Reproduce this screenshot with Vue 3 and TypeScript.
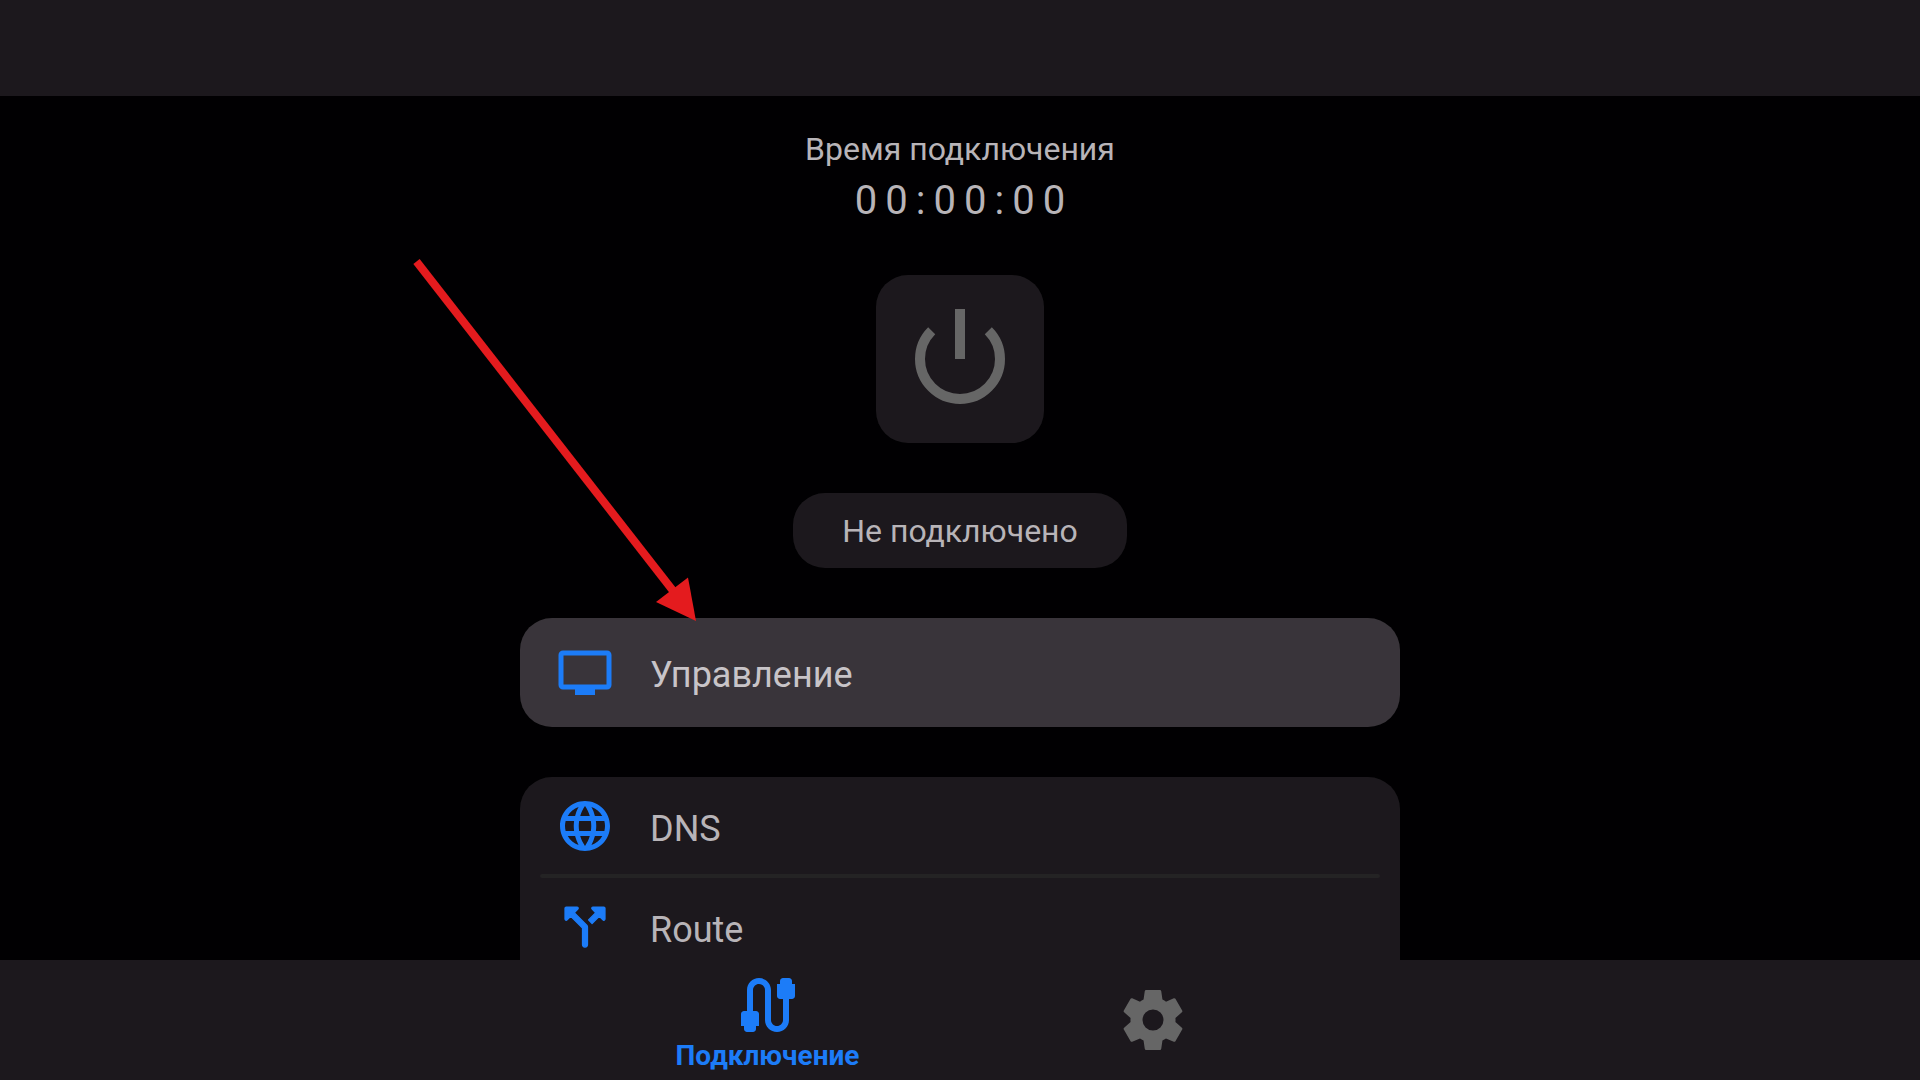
<script setup lang="ts">
import { ref } from 'vue'

const elapsed = ref('00:00:00')
const status = ref('Не подключено')

const settings = [
  {
    id: 'dns',
    label: 'DNS',
    outline: 0,
    icon: 'M11.99 2C6.47 2 2 6.48 2 12s4.47 10 9.99 10C17.52 22 22 17.52 22 12S17.52 2 11.99 2zm6.93 6h-2.95c-.32-1.25-.78-2.45-1.38-3.56 1.84.63 3.37 1.91 4.33 3.56zM12 4.04c.83 1.2 1.48 2.53 1.91 3.96h-3.82c.43-1.43 1.08-2.76 1.91-3.96zM4.26 14C4.1 13.36 4 12.69 4 12s.1-1.36.26-2h3.38c-.08.66-.14 1.32-.14 2 0 .68.06 1.34.14 2H4.26zm.82 2h2.95c.32 1.25.78 2.45 1.38 3.56-1.84-.63-3.37-1.9-4.33-3.56zm2.95-8H5.08c.96-1.66 2.49-2.93 4.33-3.56C8.81 5.55 8.35 6.75 8.03 8zM12 19.96c-.83-1.2-1.48-2.53-1.91-3.96h3.82c-.43 1.43-1.08 2.76-1.91 3.96zM14.34 14H9.66c-.09-.66-.16-1.32-.16-2 0-.68.07-1.35.16-2h4.68c.09.65.16 1.32.16 2 0 .68-.07 1.34-.16 2zm.25 5.56c.6-1.11 1.06-2.31 1.38-3.56h2.95c-.96 1.65-2.49 2.93-4.33 3.56zM16.36 14c.08-.66.14-1.32.14-2 0-.68-.06-1.34-.14-2h3.38c.16.64.26 1.31.26 2s-.1 1.36-.26 2h-3.38z',
  },
  {
    id: 'route',
    label: 'Route',
    outline: 0.5,
    icon: 'M14.85 4.85l1.44 1.44-2.88 2.88 1.42 1.42 2.88-2.88 1.44 1.44c.31.31.85.09.85-.36V4.5c0-.28-.22-.5-.5-.5h-4.29c-.45 0-.67.54-.36.85zM8.79 4H4.5c-.28 0-.5.22-.5.5v4.29c0 .45.54.67.85.35L6.29 7.7 11 12.4V19c0 .55.45 1 1 1s1-.45 1-1v-7c0-.26-.11-.52-.29-.71l-5-5.01 1.44-1.44c.31-.3.09-.84-.36-.84z',
  },
]
</script>

<template>
  <div class="app">
    <header class="top-bar"></header>

    <main class="content">
      <div class="column">
        <p class="caption">Время подключения</p>
        <p class="timer">{{ elapsed }}</p>

        <button class="power" type="button" aria-label="Подключиться">
          <svg viewBox="0 0 24 24" width="120" height="120" aria-hidden="true">
            <path d="M12 2v10M6.34 6.34a8 8 0 1 0 11.32 0" fill="none" stroke="currentColor" stroke-width="2" />
          </svg>
        </button>

        <p class="status">{{ status }}</p>

        <div class="manage">
          <button class="row row-focused" type="button">
            <svg class="row-icon" viewBox="0 0 60 60" aria-hidden="true">
              <rect x="6" y="11" width="48" height="34" rx="2" fill="none" stroke="currentColor" stroke-width="5" />
              <path d="M20 45h20v8H20z" fill="currentColor" />
            </svg>
            <span class="row-label">Управление</span>
          </button>
          <svg class="pointer" viewBox="0 0 292 368" aria-hidden="true">
            <path d="M8.500 5.500L266 336" stroke="#e41b1e" stroke-width="8" />
            <path d="M248 346l32-24.500 8 43.500z" fill="#e41b1e" />
          </svg>
        </div>

        <ul class="list">
          <li v-for="item in settings" :key="item.id">
            <button class="row" type="button">
              <svg class="row-icon" viewBox="0 0 24 24" aria-hidden="true">
                <path
                  :d="item.icon"
                  fill="currentColor"
                  stroke="currentColor"
                  stroke-linejoin="round"
                  :stroke-width="item.outline"
                />
              </svg>
              <span class="row-label">{{ item.label }}</span>
            </button>
          </li>
        </ul>
      </div>
    </main>

    <nav class="nav">
      <a class="tab tab-active" href="#connection" aria-current="page">
        <svg viewBox="0 0 24 24" width="72" height="72" aria-hidden="true">
          <path
            fill="currentColor"
            d="M20 5V4c0-.55-.45-1-1-1h-2c-.55 0-1 .45-1 1v1h-1v4c0 .55.45 1 1 1h1v7c0 1.100-.9 2-2 2s-2-.9-2-2V7c0-2.210-1.790-4-4-4S5 4.790 5 7v7H4c-.55 0-1 .45-1 1v4h1v1c0 .55.45 1 1 1h2c.55 0 1-.45 1-1v-1h1v-4c0-.55-.45-1-1-1H7V7c0-1.100.9-2 2-2s2 .9 2 2v10c0 2.210 1.790 4 4 4s4-1.790 4-4v-7h1c.55 0 1-.45 1-1V5h-1z"
          />
        </svg>
        <span>Подключение</span>
      </a>
      <a class="tab" href="#settings" aria-label="Настройки">
        <svg viewBox="0 0 24 24" width="72" height="72" aria-hidden="true">
          <path
            fill="currentColor"
            d="M9.700 22q-.4 0-.45-.4l-.4-2.800q-.325-.125-.613-.3-.287-.175-.562-.375l-2.600 1.100q-.35.15-.55-.15l-2.250-3.900q-.2-.35.1-.6l2.150-1.900Q4.500 12.500 4.500 12.337v-.675q0-.162.025-.337L2.375 9.425q-.3-.25-.1-.6l2.250-3.900q.2-.3.55-.15l2.600 1.100q.275-.2.575-.375.3-.175.6-.3l.4-2.800q.05-.4.45-.4h4.600q.4 0 .45.4l.4 2.800q.325.125.613.3.287.175.562.375l2.600-1.100q.35-.15.55.15l2.250 3.900q.2.35-.1.6l-2.150 1.900q.025.175.025.337v.675q0 .163-.025.338l2.150 1.900q.3.25.1.6l-2.250 3.900q-.2.3-.55.15l-2.600-1.100q-.275.2-.575.375-.3.175-.6.3l-.4 2.800q-.05.4-.45.4zM12 15.500a3.500 3.500 0 1 0 0-7 3.500 3.500 0 0 0 0 7z"
          />
        </svg>
      </a>
    </nav>
  </div>
</template>

<style>
body {
  background: #010002;
}
</style>

<style scoped>
.app {
  display: flex;
  flex-direction: column;
  height: 100vh;
  overflow: hidden;
  background: #010002;
  color: #b8b4b8;
  font-family: Roboto, 'Noto Sans', sans-serif;
}

p,
ul {
  margin: 0;
  padding: 0;
}

ul {
  list-style: none;
}

svg {
  display: block;
}

button {
  border: 0;
  font: inherit;
  color: inherit;
  cursor: pointer;
}

.top-bar {
  flex: none;
  height: 96px;
  background: #1c181d;
}

.content {
  flex: 1;
  min-height: 0;
  overflow: hidden;
  display: flex;
  justify-content: center;
  padding: 33px 24px 0;
}

.column {
  flex: 0 1 880px;
  display: flex;
  flex-direction: column;
  align-items: center;
}

.caption {
  font-size: 32px;
  line-height: 40px;
}

.timer {
  margin: 8px 0 50px;
  padding-left: 8px;
  font-size: 40px;
  line-height: 48px;
  letter-spacing: 8px;
}

.power {
  padding: 24px;
  border-radius: 32px;
  background: #1c181d;
  color: #666666;
}

.status {
  margin: 50px 0;
  padding: 18px 49px 17px;
  border-radius: 32px;
  background: #1c181d;
  font-size: 32px;
  line-height: 40px;
}

.manage {
  position: relative;
  width: 100%;
}

.row {
  display: flex;
  align-items: center;
  gap: 35px;
  width: 100%;
  padding: 19px 35px 18px;
  background: none;
  text-align: left;
  font-size: 36px;
  line-height: 48px;
}

.row-focused {
  padding: 24px 35px 25px;
  border-radius: 32px;
  background: #39343a;
  color: #c8c4c8;
}

.row-icon {
  flex: none;
  width: 60px;
  height: 60px;
  color: #1c7cf8;
}

.row-label {
  padding-top: 6px;
}

.pointer {
  position: absolute;
  left: -112px;
  bottom: 103px;
  width: 292px;
  height: 368px;
  pointer-events: none;
}

.list {
  width: 100%;
  margin-top: 50px;
  border-radius: 32px 32px 0 0;
  background: #1c181d;
}

.list li + li::before {
  content: '';
  display: block;
  height: 4px;
  margin: 0 20px;
  border-radius: 2px;
  background: #242324;
}

.nav {
  flex: none;
  display: flex;
  justify-content: center;
  height: 120px;
  background: #1c181d;
}

.tab {
  flex: 0 1 385px;
  display: flex;
  flex-direction: column;
  align-items: center;
  justify-content: center;
  color: #666666;
  text-decoration: none;
  font-size: 28px;
  font-weight: 700;
  line-height: 30px;
}

.tab-active {
  color: #1c7cf8;
}
</style>
